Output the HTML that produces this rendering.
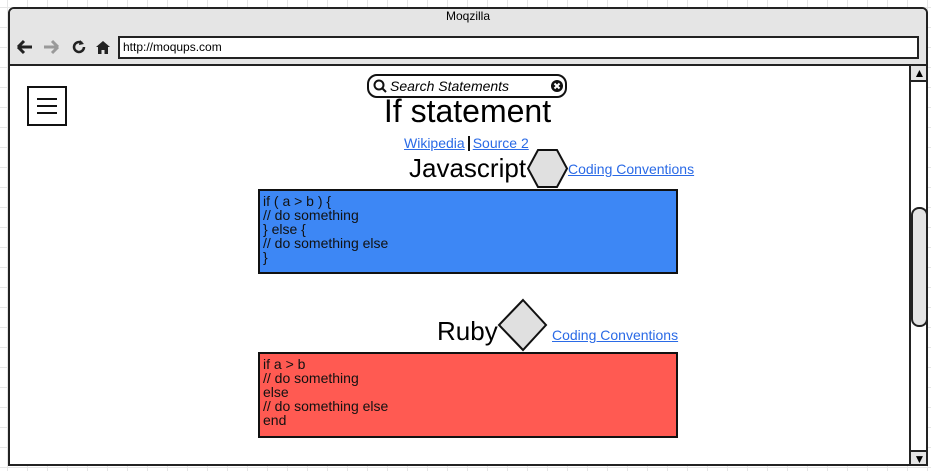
<!DOCTYPE html>
<html><head><style>
*{margin:0;padding:0;box-sizing:border-box}
body{width:931px;height:471px;overflow:hidden;position:relative;font-family:"Liberation Sans",sans-serif;background:#fff;
background-image:linear-gradient(#e6e6e6 1px,transparent 1px),linear-gradient(90deg,#e6e6e6 1px,transparent 1px);background-size:20px 20px;background-position:7px 7px}
.abs{position:absolute}
.win{left:8px;top:7px;width:920px;height:459px;border:2px solid #222;border-radius:6px 6px 0 0;background:#fff;overflow:hidden}
.bar{left:0;top:0;width:916px;height:57px;background:#e5e5e5;border-bottom:2px solid #222}
a{color:#2a6ae6;text-decoration:underline}
.code{font-size:14px;line-height:14px;padding:3px 3px;border:2px solid #111;color:#111}
</style></head><body>
<div class="abs win">
 <div class="abs bar">
  <div class="abs" style="left:0;top:0px;width:916px;text-align:center;font-size:12px">Moqzilla</div>
  <svg class="abs" style="left:4px;top:29px" width="100" height="20">
   <path d="M4 9h14M4 9l6-6M4 9l6 6" stroke="#222" stroke-width="3" fill="none"/>
   <path d="M30 9h14M44 9l-6-6M44 9l-6 6" stroke="#999" stroke-width="3" fill="none"/>
   <path d="M70 9a5 5 0 1 1-2-4" stroke="#222" stroke-width="2.5" fill="none"/><path d="M66 2l4 4-5 1z" fill="#222"/>
   <path d="M82 9l7-6 7 6h-2v7h-3.5v-4h-3v4H84V9z" fill="#222"/>
  </svg>
  <div class="abs" style="left:108px;top:27px;width:801px;height:23px;border:2px solid #222;background:#fff;font-size:12px;padding:2px 3px">http://moqups.com</div>
 </div>
 <div class="abs" style="left:899px;top:57px;width:19px;height:400px;border-left:2px solid #222;background:#fff">
  <div class="abs" style="left:0;top:0;width:17px;height:16px;border-bottom:2px solid #222;background:#e5e5e5;font-size:12px;text-align:center;line-height:15px">▲</div>
  <div class="abs" style="left:0;top:141px;width:17px;height:120px;border:2px solid #222;border-radius:8px;background:#e5e5e5"></div>
  <div class="abs" style="left:0;bottom:0;width:17px;height:16px;border-top:2px solid #222;background:#e5e5e5;font-size:12px;text-align:center;line-height:15px">▼</div>
 </div>
</div>
<div class="abs" style="left:27px;top:86px;width:40px;height:40px;border:2px solid #111">
 <div class="abs" style="left:8px;top:10px;width:20px;height:2px;background:#111"></div>
 <div class="abs" style="left:8px;top:17px;width:20px;height:2px;background:#111"></div>
 <div class="abs" style="left:8px;top:24px;width:20px;height:2px;background:#111"></div>
</div>
<div class="abs" style="left:367px;top:74px;width:200px;height:24px;border:2px solid #111;border-radius:10px;background:#fff">
 <svg class="abs" style="left:4px;top:3px" width="14" height="14"><circle cx="6" cy="6" r="4.5" stroke="#111" stroke-width="2" fill="none"/><path d="M9 9l4 4" stroke="#111" stroke-width="2"/></svg>
 <div class="abs" style="left:21px;top:2px;font-size:14px;font-style:italic">Search Statements</div>
 <svg class="abs" style="left:181px;top:3px" width="14" height="14"><circle cx="7" cy="7" r="6" fill="#111"/><path d="M4.5 4.5l5 5M9.5 4.5l-5 5" stroke="#fff" stroke-width="2"/></svg>
</div>
<div class="abs" style="left:0;top:93px;width:935px;text-align:center;font-size:32px">If statement</div>
<div class="abs" style="left:404px;top:135px;font-size:14px"><a>Wikipedia</a><span style="display:inline-block;width:2px;height:15px;background:#111;margin:0 3px;vertical-align:-3px"></span><a>Source 2</a></div>
<div class="abs" style="left:409px;top:153px;font-size:26px">Javascript</div>
<svg class="abs" style="left:527px;top:148px" width="42" height="42"><polygon points="11,2 30,2 40,20.5 30,39 11,39 1,20.5" fill="#e0e0e0" stroke="#111" stroke-width="2"/></svg>
<div class="abs" style="left:568px;top:161px;font-size:14px"><a>Coding Conventions</a></div>
<div class="abs code" style="left:258px;top:189px;width:420px;height:85px;background:#3d87f5">if ( a &gt; b ) {<br>// do something<br>} else {<br>// do something else<br>}</div>
<div class="abs" style="left:437px;top:316px;font-size:26px">Ruby</div>
<svg class="abs" style="left:497px;top:298px" width="52" height="54"><polygon points="26,2 49,27 26,52 2,27" fill="#e0e0e0" stroke="#111" stroke-width="2"/></svg>
<div class="abs" style="left:552px;top:327px;font-size:14px"><a>Coding Conventions</a></div>
<div class="abs code" style="left:258px;top:352px;width:420px;height:86px;background:#ff5a52">if a &gt; b<br>// do something<br>else<br>// do something else<br>end</div>
</body></html>
